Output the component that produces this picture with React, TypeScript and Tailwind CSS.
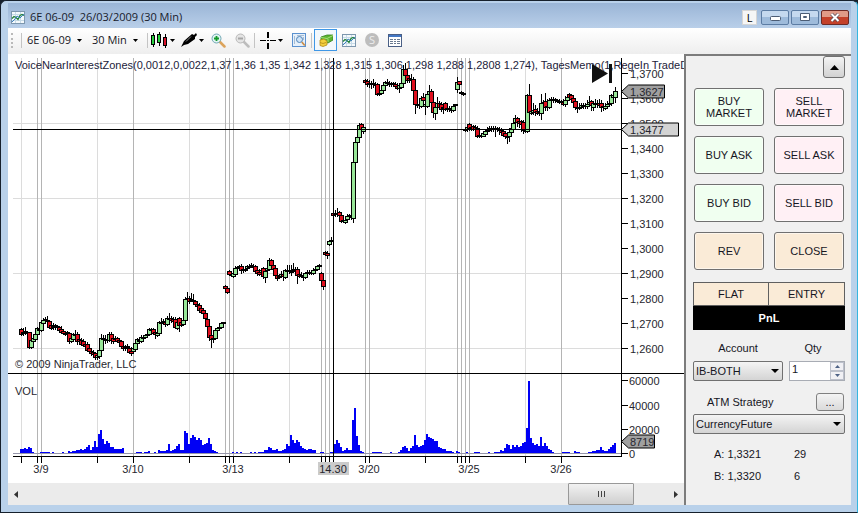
import type { ReactNode } from "react";

// [x, high, open, close, low] in chart units, y grows downwards
type Bar = [number, number, number, number, number];

const BARS: Bar[] = [
  [21, 328, 329, 334, 335], [23, 328, 332, 333, 335], [25, 327, 331, 332, 334], [27, 331, 332, 333, 333],
  [29, 332, 332, 347, 348], [31, 339, 347, 340, 348], [33, 337, 341, 338, 342], [35, 333, 339, 334, 340],
  [37, 327, 334, 328, 335], [39, 328, 330, 329, 331], [41, 320, 330, 322, 331], [43, 318, 323, 320, 324],
  [45, 317, 320, 319, 322], [47, 316, 320, 321, 325], [49, 320, 321, 327, 328], [51, 324, 325, 328, 329],
  [53, 323, 327, 326, 329], [55, 324, 326, 325, 329], [57, 325, 326, 327, 328], [59, 326, 327, 330, 331],
  [61, 326, 329, 332, 333], [63, 330, 331, 333, 334], [65, 331, 333, 334, 335], [67, 331, 333, 332, 334],
  [69, 332, 333, 341, 343], [71, 336, 341, 338, 342], [73, 333, 339, 334, 341], [75, 330, 334, 335, 337],
  [77, 332, 334, 341, 344], [79, 337, 339, 341, 344], [81, 338, 340, 344, 345], [83, 339, 341, 345, 346],
  [85, 342, 344, 346, 348], [87, 342, 344, 350, 351], [89, 347, 348, 351, 353], [91, 349, 351, 353, 355],
  [93, 350, 352, 354, 356], [95, 352, 353, 357, 359], [97, 352, 357, 355, 359], [99, 349, 356, 350, 358],
  [101, 334, 350, 338, 351], [103, 335, 339, 338, 342], [105, 335, 340, 339, 343], [107, 337, 339, 340, 342],
  [109, 332, 340, 334, 341], [111, 332, 334, 340, 343], [113, 335, 338, 341, 343], [115, 336, 339, 338, 341],
  [117, 337, 338, 341, 342], [119, 338, 340, 342, 345], [121, 340, 341, 346, 347], [123, 344, 346, 348, 350],
  [125, 345, 348, 347, 350], [127, 344, 347, 346, 349], [129, 346, 348, 352, 353], [131, 347, 351, 353, 355],
  [133, 347, 351, 348, 353], [135, 342, 349, 343, 350], [137, 338, 343, 339, 345], [139, 338, 341, 340, 343],
  [141, 335, 341, 337, 342], [143, 335, 338, 337, 339], [145, 334, 337, 335, 338], [147, 333, 335, 334, 337],
  [149, 328, 334, 329, 335], [151, 328, 330, 329, 332], [153, 328, 329, 333, 334], [155, 330, 332, 334, 338],
  [157, 331, 335, 333, 336], [159, 321, 333, 322, 334], [161, 318, 323, 322, 325], [163, 319, 322, 321, 324],
  [165, 320, 322, 324, 326], [167, 316, 324, 318, 325], [169, 313, 318, 319, 322], [171, 316, 318, 320, 322],
  [173, 317, 319, 321, 325], [175, 317, 319, 327, 328], [177, 318, 328, 322, 329], [179, 317, 318, 325, 331],
  [181, 319, 322, 325, 326], [183, 318, 324, 320, 325], [185, 297, 320, 299, 321], [187, 292, 299, 298, 302],
  [189, 296, 298, 301, 303], [191, 293, 300, 299, 301], [193, 294, 300, 301, 303], [195, 300, 301, 304, 305],
  [197, 302, 304, 306, 308], [199, 303, 305, 310, 312], [201, 306, 308, 312, 313], [203, 308, 310, 313, 314],
  [205, 311, 313, 318, 320], [207, 316, 319, 326, 327], [209, 325, 326, 337, 340], [211, 333, 335, 339, 347],
  [213, 337, 339, 338, 342], [215, 329, 338, 330, 339], [217, 327, 330, 328, 331], [219, 325, 328, 327, 329],
  [221, 322, 327, 323, 328], [223, 322, 323, 322, 324],
  [225, 285, 286, 288, 289], [227, 287, 288, 292, 293], [229, 270, 271, 274, 275], [231, 272, 274, 275, 276],
  [233, 272, 276, 273, 277], [235, 266, 274, 268, 275], [237, 266, 268, 267, 269], [239, 265, 266, 267, 269],
  [241, 264, 266, 270, 273], [243, 267, 269, 270, 272], [245, 267, 270, 269, 271], [247, 265, 268, 266, 269],
  [249, 264, 267, 266, 268], [251, 263, 266, 265, 267], [253, 264, 266, 267, 268], [255, 265, 266, 271, 272],
  [257, 268, 270, 273, 275], [259, 269, 272, 274, 275], [261, 268, 272, 270, 274], [263, 267, 268, 276, 278],
  [265, 270, 277, 271, 282], [267, 266, 270, 268, 271], [269, 258, 269, 260, 270], [271, 259, 260, 265, 267],
  [273, 263, 265, 269, 271], [275, 267, 268, 275, 277], [277, 273, 275, 278, 280], [279, 274, 277, 276, 278],
  [281, 271, 276, 274, 277], [283, 272, 274, 276, 280], [285, 269, 277, 270, 278], [287, 265, 270, 271, 272],
  [289, 265, 271, 270, 273], [291, 265, 271, 272, 275], [293, 263, 270, 269, 272], [295, 267, 270, 271, 274],
  [297, 267, 269, 275, 283], [299, 272, 274, 276, 277], [301, 272, 275, 276, 277], [303, 274, 276, 277, 280],
  [305, 272, 277, 273, 278], [307, 270, 273, 272, 275], [309, 270, 273, 272, 274], [311, 270, 272, 273, 274],
  [313, 268, 273, 270, 274], [315, 267, 270, 269, 271], [317, 265, 269, 266, 270], [319, 264, 266, 265, 268],
  [321, 272, 273, 280, 281], [323, 279, 280, 286, 289], [325, 251, 252, 254, 255], [327, 251, 253, 255, 258],
  [329, 240, 244, 241, 245], [331, 237, 241, 240, 242], [333, 212, 213, 215, 216], [335, 210, 213, 214, 216],
  [337, 208, 213, 214, 216], [339, 211, 212, 215, 218], [341, 213, 215, 221, 222], [343, 219, 220, 221, 222],
  [345, 218, 222, 220, 223], [347, 214, 219, 216, 220], [349, 214, 216, 215, 218], [351, 213, 216, 217, 219],
  [353, 160, 218, 162, 222], [355, 141, 162, 142, 163], [357, 135, 142, 137, 144], [359, 123, 137, 125, 138],
  [361, 123, 124, 129, 132], [363, 126, 131, 127, 133], [365, 79, 80, 82, 83], [367, 79, 81, 84, 86],
  [369, 80, 83, 84, 87], [371, 81, 83, 84, 88], [373, 79, 83, 84, 87], [375, 82, 84, 85, 88],
  [377, 83, 84, 94, 95], [379, 90, 94, 93, 95], [381, 88, 93, 90, 94], [383, 84, 90, 85, 91],
  [385, 81, 85, 82, 86], [387, 79, 82, 83, 85], [389, 81, 83, 84, 86], [391, 82, 84, 83, 86],
  [393, 82, 83, 84, 86], [395, 82, 84, 86, 88], [397, 83, 86, 88, 89], [399, 83, 88, 85, 92],
  [401, 81, 87, 83, 88], [403, 65, 83, 69, 84], [405, 63, 69, 75, 77], [407, 73, 75, 80, 82],
  [409, 76, 78, 80, 82], [411, 74, 79, 80, 82], [413, 77, 79, 90, 92], [415, 88, 90, 104, 113],
  [417, 102, 104, 105, 107], [419, 101, 104, 105, 108], [421, 96, 106, 98, 107], [423, 93, 97, 100, 103],
  [425, 98, 106, 104, 114], [427, 94, 106, 94, 107], [429, 85, 94, 91, 96], [431, 89, 91, 102, 104],
  [433, 97, 102, 112, 117], [435, 105, 113, 107, 119], [437, 97, 107, 103, 109], [439, 101, 103, 107, 109],
  [441, 102, 104, 109, 111], [443, 103, 107, 108, 113], [445, 102, 103, 109, 110], [447, 105, 108, 109, 111],
  [449, 106, 109, 108, 111], [451, 106, 109, 110, 112], [453, 105, 110, 106, 111], [455, 104, 105, 104, 106],
  [457, 77, 89, 82, 92], [459, 81, 81, 84, 85], [461, 91, 92, 93, 94], [463, 92, 93, 94, 95],
  [465, 127, 129, 130, 131], [467, 124, 129, 127, 131], [469, 123, 124, 128, 130], [471, 125, 128, 127, 130],
  [473, 125, 126, 129, 130], [475, 125, 127, 129, 131], [477, 126, 128, 136, 137], [479, 134, 135, 136, 137],
  [481, 134, 136, 135, 137], [483, 131, 136, 133, 136], [485, 129, 134, 131, 136], [487, 127, 131, 130, 133],
  [489, 126, 130, 128, 131], [491, 126, 128, 129, 131], [493, 126, 129, 128, 131], [495, 126, 129, 128, 136],
  [497, 127, 128, 129, 131], [499, 127, 129, 130, 134], [501, 128, 130, 132, 134], [503, 129, 131, 135, 136],
  [505, 131, 133, 136, 138], [507, 134, 137, 136, 143], [509, 130, 136, 132, 141], [511, 126, 132, 128, 133],
  [513, 121, 129, 123, 131], [515, 115, 122, 118, 124], [517, 117, 118, 122, 126], [519, 119, 121, 123, 127],
  [521, 120, 121, 124, 131], [523, 120, 122, 130, 133], [525, 128, 130, 131, 132], [527, 94, 131, 95, 132],
  [529, 84, 95, 112, 114], [531, 109, 113, 111, 114], [533, 103, 112, 110, 114], [535, 105, 109, 112, 115],
  [537, 108, 111, 113, 114], [539, 110, 112, 113, 115], [541, 94, 113, 103, 119], [543, 100, 103, 102, 106],
  [545, 93, 101, 107, 110], [547, 99, 107, 106, 110], [549, 98, 107, 100, 108], [551, 97, 100, 99, 102],
  [553, 97, 99, 100, 102], [555, 98, 99, 100, 102], [557, 99, 100, 101, 102], [559, 99, 101, 102, 103],
  [561, 100, 101, 102, 103], [563, 99, 102, 104, 105], [565, 96, 104, 100, 106], [567, 95, 100, 97, 102],
  [569, 93, 94, 97, 99], [571, 94, 95, 99, 101], [573, 96, 98, 102, 104], [575, 100, 101, 107, 109],
  [577, 105, 107, 108, 112], [579, 103, 108, 107, 109], [581, 103, 107, 105, 108], [583, 103, 105, 106, 108],
  [585, 103, 105, 106, 108], [587, 100, 106, 104, 108], [589, 96, 104, 102, 105], [591, 100, 101, 105, 110],
  [593, 101, 107, 103, 110], [595, 99, 103, 104, 106], [597, 100, 104, 103, 107], [599, 99, 103, 105, 107],
  [601, 100, 103, 107, 111], [603, 104, 107, 106, 110], [605, 103, 108, 106, 109], [607, 101, 106, 104, 107],
  [609, 102, 104, 103, 105], [611, 94, 103, 95, 105], [613, 93, 97, 95, 101], [615, 87, 97, 91, 102],
];

// runs of volume heights, one value for every two units of x
const VOLUME: { start: number; heights: number[] }[] = [
  {
    start: 20,
    heights: [4, 4, 5, 4, 6, 5, 1, 0, 0, 0, 1, 1, 1, 1, 1, 0, 1, 0, 0, 0, 0, 1, 0, 0, 2, 1, 2, 2, 3, 3, 4, 3, 4, 6, 8, 3, 6, 12, 6, 19, 23, 14, 9, 12, 10, 6, 6, 4, 4, 4, 4, 5],
  },
  {
    start: 136,
    heights: [1, 1, 1, 0, 1, 1, 2, 0, 0, 1, 0, 3, 2, 2, 2, 3, 9, 2, 3, 4, 7, 9, 3, 3, 22, 20, 9, 15, 18, 16, 13, 15, 13, 8, 9, 10, 15, 9, 3, 2, 1],
  },
  {
    start: 232,
    heights: [1, 0, 1, 0, 1, 0, 0, 0, 0, 1, 0, 1, 0, 1, 1, 1, 3, 3, 6, 5, 3, 3, 4, 2, 2, 3, 4, 9, 7, 18, 13, 10, 13, 11, 7, 5, 4, 3, 4, 4, 3, 3, 0, 0, 1, 1, 0, 0, 0, 1, 1, 9, 13, 10, 6, 2, 3, 5, 3, 3, 33, 45, 17, 8, 2, 1],
  },
  {
    start: 372,
    heights: [1, 1, 1, 1, 1, 0, 0, 0, 0, 1, 0, 0, 0, 1, 3, 6, 7, 5, 2, 5, 7, 18, 8, 6, 7, 8, 13, 19, 16, 15, 14, 12, 12, 6, 5, 4, 4, 2, 2, 2, 1, 0, 2, 1, 0, 0, 0, 1, 0, 0, 0, 1, 1, 1],
  },
  {
    start: 488,
    heights: [1, 0, 0, 1, 1, 1, 3, 2, 5, 9, 8, 4, 8, 6, 8, 6, 7, 10, 11, 25, 72, 15, 10, 8, 9, 7, 16, 7, 10, 7, 4, 3, 1],
  },
  {
    start: 562,
    heights: [1, 1, 1, 1, 0, 0, 2, 1, 1, 0, 0, 0, 0, 1, 1, 2, 2, 3, 3, 6, 3, 2, 2, 4, 6, 8, 10],
  },
];

const SESSION_LINES = [37, 41, 133, 225, 229, 233, 321, 325, 329, 365, 369, 457, 461, 465, 469, 561];
const LIGHT_LINES = [21, 97, 189, 289, 425, 525];
const TICKS = [...SESSION_LINES, ...LIGHT_LINES, 333];
const PRICES = ["1,3700", "1,3600", "1,3500", "1,3400", "1,3300", "1,3200", "1,3100", "1,3000", "1,2900", "1,2800", "1,2700", "1,2600"];
const DATES = [
  { x: 41, label: "3/9" },
  { x: 133, label: "3/10" },
  { x: 233, label: "3/13" },
  { x: 369, label: "3/20" },
  { x: 469, label: "3/25" },
  { x: 561, label: "3/26" },
];
const VOLUME_SCALE = [
  { y: 380, label: "60000" },
  { y: 405, label: "40000" },
  { y: 429, label: "20000" },
  { y: 453, label: "0" },
];

function Candle({ bar }: { bar: Bar }) {
  const [x, high, open, close, low] = bar;
  const top = Math.min(open, close);
  const height = Math.abs(open - close);
  return (
    <g>
      <rect x={x} y={high} width="1" height={low - high + 1} fill="#000" />
      <rect
        x={x - 1.5}
        y={top + 0.5}
        width="4"
        height={height}
        fill={close > open ? "#e00f1e" : "#98e698"}
        stroke="#000"
      />
    </g>
  );
}

function PriceTag({ y, width, fill, label }: { y: number; width: number; fill: string; label: string }) {
  return (
    <g>
      <path
        d={`M621.5 ${y + 0.5}l7 -6.5h${width}v13h-${width}z`}
        fill={fill}
        stroke="#000"
      />
      <text x="630" y={y + 5}>{label}</text>
    </g>
  );
}

function Chart() {
  return (
    <svg
      viewBox="8 54 676 429"
      className="block w-full bg-white font-['Liberation_Sans',Arial,sans-serif] text-[11px]"
      role="img"
      aria-label="6E 06-09 price and volume"
    >
      <g shapeRendering="crispEdges">
        {[123, 198, 273, 348].map((y) => (
          <rect key={y} x="13" y={y} width="608" height="1" fill="#dcdcdc" />
        ))}
        {LIGHT_LINES.map((x) => (
          <rect key={x} x={x} y="58" width="1" height="398" fill="#dcdcdc" />
        ))}
        {SESSION_LINES.map((x) => (
          <rect key={x} x={x} y="58" width="1" height="398" fill="#b4b4b4" />
        ))}
        <rect x="13" y="453" width="608" height="1" fill="#9696aa" />
        {VOLUME.map(({ start, heights }) =>
          heights.map((h, i) => (
            <rect key={start + i * 2} x={start + i * 2} y={453 - h} width="2" height={h} fill="#0000f5" />
          ))
        )}
      </g>

      <g shapeRendering="crispEdges">
        {BARS.map((bar) => (
          <Candle key={bar[0]} bar={bar} />
        ))}
        <rect x="13" y="129" width="608" height="1" />
        <rect x="333" y="58" width="1" height="404" />
        <rect x="8" y="373" width="676" height="1" />
        <rect x="13" y="456" width="609" height="1" />
        <rect x="621" y="58" width="1" height="399" />
        {TICKS.map((x) => (
          <rect key={x} x={x} y="457" width="1" height="6" />
        ))}
        {PRICES.map((p, i) => (
          <rect key={p} x="622" y={73 + i * 25} width="6" height="1" />
        ))}
        {VOLUME_SCALE.map(({ y, label }) => (
          <rect key={label} x="622" y={y} width="6" height="1" />
        ))}
      </g>

      <g fill="#26262e">
        <text x="15" y="69" fill="#22223a">
          VoiceNearInterestZones(0,0012,0,0022,1,37 1,36 1,35 1,342 1,328 1,315 1,306 1,298 1,288 1,2808 1,274), TagesMemo(1,RegeIn TradeD
        </text>
        <text x="15" y="368">© 2009 NinjaTrader, LLC</text>
        <text x="15" y="395">VOL</text>
        {PRICES.map((p, i) => (
          <text key={p} x="630" y={78 + i * 25}>{p}</text>
        ))}
        {VOLUME_SCALE.map(({ y, label }) => (
          <text key={label} x="629" y={y + 5}>{label}</text>
        ))}
        <rect x="318" y="462" width="31" height="13" fill="#cbcbcb" />
        <g textAnchor="middle">
          {DATES.map(({ x, label }) => (
            <text key={label} x={x} y="473">{label}</text>
          ))}
          <text x="333" y="473">14.30</text>
        </g>
        <PriceTag y={91} width={36} fill="#a0a0a0" label="1,3627" />
        <PriceTag y={129} width={50} fill="#d3d3d3" label="1,3477" />
        <PriceTag y={441} width={26} fill="#a0a0a0" label="8719" />
      </g>
      <path d="M592 64l16 9.500l-16 9.500zM609 64h3v19h-3z" fill="#111" />
    </svg>
  );
}

function ChartIcon() {
  return (
    <svg viewBox="0 0 14 13" className="h-[13px] w-[14px] shrink-0">
      <rect x=".5" y=".5" width="13" height="12" fill="#f4f9fc" stroke="#7d97ae" />
      <path d="M1 3.500h12M1 9.500h12M4.500 1v11M9.500 1v11" stroke="#c7dbe8" fill="none" />
      <path d="M1 7.500l2-2 2 1 2 2 2-4 2-1 2 1" stroke="#258339" strokeWidth="1.300" fill="none" />
      <path d="M1 11l3-3 2-3 3 2 4-4" stroke="#3d80bc" fill="none" />
    </svg>
  );
}

function Caret() {
  return (
    <svg viewBox="0 0 5 3" className="h-[3px] w-[5px] shrink-0">
      <path d="M0 0h5L2.500 3z" fill="#000" />
    </svg>
  );
}

function Divider() {
  return <div className="h-[15px] w-px shrink-0 bg-[#c4c4c4]" />;
}

function Zoom({ minus = false }: { minus?: boolean }) {
  const rim = minus ? "#b9b9b9" : "#72a8b5";
  const sign = minus ? "#a5a5a5" : "#149a2b";
  return (
    <svg viewBox="0 0 15 15" className="h-[15px] w-[15px]">
      <path d="M8.500 8.500l5 5" stroke={minus ? "#bdbdbd" : "#dca45c"} strokeWidth="2.500" strokeLinecap="round" />
      <circle cx="5.500" cy="5.500" r="4.500" fill={minus ? "#e4e4e4" : "#e0f3f1"} stroke={rim} />
      <path d={minus ? "M3 5.500h5" : "M3 5.500h5M5.500 3v5"} stroke={sign} strokeWidth="1.800" />
    </svg>
  );
}

function Tool({ label, width, children }: { label: string; width: string; children: ReactNode }) {
  return (
    <button type="button" aria-label={label} className={`flex h-[22px] shrink-0 items-center justify-center gap-[2px] ${width}`}>
      {children}
    </button>
  );
}

function Toolbar() {
  return (
    <div className="flex h-[26px] items-center bg-linear-to-b from-white to-[#eeeeee] pb-[2px] pl-[3px] text-[11px] text-[#16161e]">
      <div className="mr-2 h-[15px] w-0 border-l-2 border-dotted border-[#b9b9b9]" />
      <Divider />
      <button type="button" className="flex w-[65px] shrink-0 items-center gap-[6px] pl-[5px] whitespace-nowrap">
        6E 06-09 <Caret />
      </button>
      <button type="button" className="flex w-[60px] shrink-0 items-center gap-[6px] pl-[5px] whitespace-nowrap">
        30 Min <Caret />
      </button>
      <Divider />
      <Tool label="Chart style" width="w-[30px]">
        <svg viewBox="0 0 17 16" className="h-4 w-[17px]" shapeRendering="crispEdges">
          <path d="M2 1h1v14h-1zM8 0h1v14h-1zM14 2h1v14h-1z" />
          <path d="M.5 3.500h3v9h-3zM6.500 2.500h3v8h-3z" fill="#27d03d" stroke="#000" />
          <path d="M12.500 5.500h3v8h-3z" fill="#d9122b" stroke="#000" />
        </svg>
        <Caret />
      </Tool>
      <Tool label="Drawing tools" width="w-7">
        <svg viewBox="0 0 16 16" className="h-4 w-4">
          <path d="M0 15l3-6 8-7 2 1 2-2 1 2-2 2v2l-7 5-4 1z" fill="#000" />
          <path d="M5 9.500l5-5" stroke="#8a8a8a" />
        </svg>
        <Caret />
      </Tool>
      <Tool label="Zoom in" width="w-6"><Zoom /></Tool>
      <Tool label="Zoom out" width="w-6"><Zoom minus /></Tool>
      <Divider />
      <Tool label="Cross hair" width="w-[32px]">
        <svg viewBox="0 0 16 17" className="h-[17px] w-4" shapeRendering="crispEdges">
          <path d="M7 0h2v6h-2zM7 11h2v6h-2zM0 8h6v1h-6zM10 8h6v1h-6zM7 8h2v1h-2z" />
        </svg>
        <Caret />
      </Tool>
      <Tool label="Data box" width="w-6">
        <svg viewBox="0 0 14 14" className="h-[14px] w-[14px]">
          <rect x=".5" y=".5" width="13" height="13" fill="#e6f0fa" stroke="#5b91cf" />
          <path d="M2.500 3v8M5 2.500h7M11.500 4v3" stroke="#a8bdd4" />
          <circle cx="7.500" cy="6.500" r="3" fill="#cfe4f8" stroke="#4f83b8" />
          <path d="M9.800 9l3 3.500" stroke="#cc8f4a" strokeWidth="1.800" />
        </svg>
      </Tool>
      <Divider />
      <button type="button" aria-label="Chart trader" className="ml-[2px] flex h-[22px] w-[23px] shrink-0 items-center justify-center border border-[#3f97e6] bg-[#f3f8fc]">
        <svg viewBox="0 0 14 13" className="h-[13px] w-[14px]">
          <path d="M2 3l6-2 6 0v5l-5 3-7-2z" fill="#5cb531" stroke="#32801e" strokeWidth=".8" />
          <path d="M2 3.500l6 1 6-3M9 5v3" stroke="#a7df78" fill="none" />
          <path d="M1 6l4-1 3 2v4l-4 1.500-3-1z" fill="#f3cf3d" stroke="#b38a19" strokeWidth=".8" />
          <path d="M1 8.500l3 1 3-1" stroke="#b38a19" fill="none" strokeWidth=".8" />
        </svg>
      </button>
      <Tool label="Chart" width="w-6"><ChartIcon /></Tool>
      <Tool label="Strategies" width="w-[22px]">
        <span className="flex h-[14px] w-[14px] items-center justify-center rounded-full bg-[#bdbdbd] text-[#ededed]">S</span>
      </Tool>
      <Tool label="Properties" width="w-6">
        <svg viewBox="0 0 14 13" className="h-[13px] w-[14px]" shapeRendering="crispEdges">
          <rect x=".5" y=".5" width="13" height="12" fill="#fff" stroke="#4a5f85" />
          <path d="M1 1h12v2h-12z" fill="#4377c4" />
          <path d="M2 5.500h3M6 5.500h2M9 5.500h3M2 7.500h3M6 7.500h2M9 7.500h3M2 9.500h3M6 9.500h2M9 9.500h3" stroke="#6a7a90" />
        </svg>
      </Tool>
    </div>
  );
}

function TitleBar() {
  return (
    <header className="flex h-[25px] items-center bg-linear-to-b from-[#9ab5d6] to-[#b9cfe9] pt-[3px] pr-[2px] pl-[3px]">
      <ChartIcon />
      <h1 className="ml-[5px] flex-1 text-[11px] whitespace-pre text-[#17202c]">6E 06-09  26/03/2009 (30 Min)</h1>
      <button type="button" className="mr-1 h-[15px] w-[15px] border border-[#d6d6d6] bg-[#f6f6f6] text-[11px] leading-[13px]">L</button>
      <div className="flex gap-[2px]">
        <button type="button" aria-label="Minimize" className="flex h-[15px] w-7 items-center justify-center rounded-[2px] border border-[#5c7ca3] bg-linear-to-b from-[#c5d9ef] from-50% to-[#9ebbdb] to-50%">
          <svg viewBox="0 0 12 8" className="h-2 w-3"><rect x="1.500" y="3.500" width="10" height="4" rx="1" fill="#fff" stroke="#4c5d75" /></svg>
        </button>
        <button type="button" aria-label="Maximize" className="flex h-[15px] w-7 items-center justify-center rounded-[2px] border border-[#5c7ca3] bg-linear-to-b from-[#c5d9ef] from-50% to-[#9ebbdb] to-50%">
          <svg viewBox="0 0 12 8" className="h-2 w-3"><path d="M1.500 .5h9v7h-9zM4.500 3.500h3v1h-3z" fill="#fff" stroke="#4c5d75" /></svg>
        </button>
        <button type="button" aria-label="Close" className="flex h-[15px] w-7 items-center justify-center rounded-[2px] border border-[#6d2a25] bg-linear-to-b from-[#e09a87] from-50% to-[#c4412a] to-50%">
          <svg viewBox="0 0 12 9" className="h-[9px] w-3">
            <path d="M2.500 1l7 7M9.500 1l-7 7" stroke="#5b4a54" strokeWidth="3.500" />
            <path d="M2.500 1l7 7M9.500 1l-7 7" stroke="#fff" strokeWidth="2" />
          </svg>
        </button>
      </div>
    </header>
  );
}

function OrderButton({ color, children }: { color: string; children: ReactNode }) {
  return (
    <button type="button" className={`h-[38px] rounded-[3px] border border-[#707070] leading-3 shadow-[inset_0_0_0_1px_#fff8] ${color}`}>
      {children}
    </button>
  );
}

function SelectBox({ id, value }: { id: string; value: string }) {
  return (
    <div className="relative">
      <select id={id} defaultValue={value} className="block h-5 w-full appearance-none rounded-[2px] border border-[#707070] bg-linear-to-b from-[#f4f4f4] to-[#d4d4d4] pl-[2px]">
        <option>{value}</option>
      </select>
      <svg viewBox="0 0 8 4" className="pointer-events-none absolute top-2 right-1 h-1 w-2"><path d="M0 0h8L4 4z" /></svg>
    </div>
  );
}

function TradePanel() {
  return (
    <aside className="w-[167px] shrink-0 border-t-2 border-l-2 border-[#7c7c7c] bg-[#f0f0f0] pr-[6px] pl-[7px] font-['Liberation_Sans',Arial,sans-serif] text-[11px] text-[#16161e]">
      <div className="flex justify-end">
        <button type="button" aria-label="Collapse" className="flex h-[22px] w-[22px] items-center justify-center rounded-[3px] border border-[#707070] bg-linear-to-b from-[#f4f4f4] to-[#d2d2d2]">
          <svg viewBox="0 0 9 5" className="h-[5px] w-[9px]"><path d="M4.500 0L9 5H0z" /></svg>
        </button>
      </div>
      <div className="mt-[10px] grid grid-cols-2 gap-[10px] px-px">
        <OrderButton color="bg-[#f0fff0]">BUY<br />MARKET</OrderButton>
        <OrderButton color="bg-[#fff0f5]">SELL<br />MARKET</OrderButton>
        <OrderButton color="bg-[#f0fff0]">BUY ASK</OrderButton>
        <OrderButton color="bg-[#fff0f5]">SELL ASK</OrderButton>
        <OrderButton color="bg-[#f0fff0]">BUY BID</OrderButton>
        <OrderButton color="bg-[#fff0f5]">SELL BID</OrderButton>
        <OrderButton color="bg-[#faebd7]">REV</OrderButton>
        <OrderButton color="bg-[#faebd7]">CLOSE</OrderButton>
      </div>
      <div className="mt-3 grid h-6 grid-cols-2 divide-x divide-[#606060] border border-[#606060] bg-[#faebd7] text-center leading-[22px]">
        <div>FLAT</div>
        <div>ENTRY</div>
      </div>
      <div className="h-6 bg-black text-center leading-6 font-bold text-white">PnL</div>
      <div className="mt-[10px] flex gap-[6px]">
        <div className="flex flex-1 flex-col gap-[5px]">
          <label htmlFor="account" className="text-center leading-4">Account</label>
          <SelectBox id="account" value="IB-BOTH" />
        </div>
        <div className="flex w-14 flex-col gap-[5px]">
          <label htmlFor="qty" className="pr-2 text-center leading-4">Qty</label>
          <div className="flex h-5 border border-[#a8acb4] bg-white">
            <input id="qty" type="text" defaultValue="1" className="w-0 flex-1 pb-1 pl-[2px] outline-none" />
            <div className="flex w-[14px] flex-col">
              <button type="button" aria-label="Increase" className="flex flex-1 items-center justify-center border border-[#bcc0cb] bg-[#f0f0f4]">
                <svg viewBox="0 0 5 3" className="h-[3px] w-[5px]"><path d="M2.500 0L5 3H0z" fill="#4d6185" /></svg>
              </button>
              <button type="button" aria-label="Decrease" className="flex flex-1 items-center justify-center border border-[#bcc0cb] bg-[#f0f0f4]">
                <svg viewBox="0 0 5 3" className="h-[3px] w-[5px]"><path d="M0 0h5L2.500 3z" fill="#4d6185" /></svg>
              </button>
            </div>
          </div>
        </div>
      </div>
      <div className="mt-3 flex items-center justify-between">
        <label htmlFor="atm" className="pl-[14px]">ATM Strategy</label>
        <button type="button" className="mr-px h-[18px] w-7 rounded-[3px] border border-[#808080] bg-linear-to-b from-[#f4f4f4] to-[#dadada] leading-3">...</button>
      </div>
      <div className="mt-[3px]">
        <SelectBox id="atm" value="CurrencyFuture" />
      </div>
      <dl className="mt-[9px] grid grid-cols-[80px_1fr] pl-[21px] leading-[22px]">
        <dt>A: 1,3321</dt>
        <dd>29</dd>
        <dt>B: 1,3320</dt>
        <dd>6</dd>
      </dl>
    </aside>
  );
}

function ScrollBar() {
  return (
    <div className="flex h-[22px] items-center bg-[#ebebeb] px-[6px]">
      <button type="button" aria-label="Scroll left">
        <svg viewBox="0 0 4 7" className="h-[7px] w-1"><path d="M4 0v7L0 3.500z" fill="#333" /></svg>
      </button>
      <div className="flex flex-1 justify-end pr-10">
        <button type="button" aria-label="Scroll position" className="flex h-[22px] w-[66px] items-center justify-center gap-[2px] rounded-[1px] border border-[#999] bg-linear-to-b from-[#f2f2f2] to-[#cfcfcf]">
          <span className="h-[6px] w-px bg-[#444]" />
          <span className="h-[6px] w-px bg-[#444]" />
          <span className="h-[6px] w-px bg-[#444]" />
        </button>
      </div>
      <button type="button" aria-label="Scroll right">
        <svg viewBox="0 0 4 7" className="h-[7px] w-1"><path d="M0 0v7l4-3.500z" fill="#333" /></svg>
      </button>
    </div>
  );
}

export default function App() {
  return (
    <div className="bg-[#16202c]">
      <div className="overflow-hidden rounded-t-[6px] border border-[#16202c] border-r-[#35b5df] bg-[#b9d1ea] pt-[2px] pr-[6px] pb-[7px] pl-[7px] font-['Open_Sans','Noto_Sans',sans-serif]">
        <TitleBar />
        <Toolbar />
        <div className="flex bg-white">
          <main className="min-w-0 flex-1">
            <Chart />
            <ScrollBar />
          </main>
          <TradePanel />
        </div>
      </div>
    </div>
  );
}
